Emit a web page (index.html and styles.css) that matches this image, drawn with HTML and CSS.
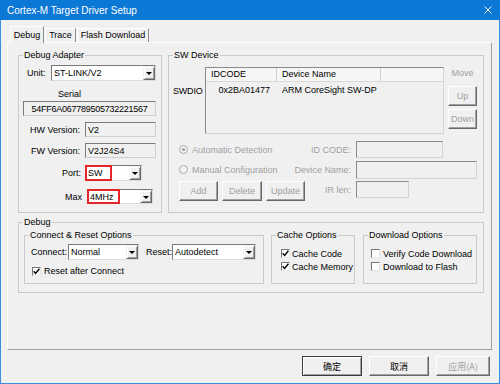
FILE: index.html
```html
<!DOCTYPE html>
<html>
<head>
<meta charset="utf-8">
<title>Cortex-M Target Driver Setup</title>
<link rel="stylesheet" href="styles.css">
</head>
<body>
<div class="window">
  <div class="titlebar">
    <span class="title">Cortex-M Target Driver Setup</span>
    <svg class="close" width="8" height="8" viewBox="0 0 8 8"><path d="M0.5 0.5L7.5 7.5M7.5 0.5L0.5 7.5" stroke="#fff" stroke-width="1" fill="none"/></svg>
  </div>

  <div class="tabs">
    <div class="tab active w-debug">Debug</div>
    <div class="tab w-trace">Trace</div>
    <div class="tab w-flash">Flash Download</div>
  </div>

  <div class="panel">
    <div class="row1">
      <fieldset class="grp da">
        <legend>Debug Adapter</legend>
        <div class="da-body">
          <div class="unit-row">
            <span class="unit-lbl">Unit:</span>
            <div class="select w-unit"><span class="val">ST-LINK/V2</span><span class="drop"><span class="arrow"></span></span></div>
          </div>
          <div class="serial-lbl">Serial</div>
          <div class="box serial">54FF6A067789505732221567</div>
          <div class="ver-row">
            <span class="rlbl">HW Version:</span>
            <div class="box ver">V2</div>
          </div>
          <div class="ver-row">
            <span class="rlbl">FW Version:</span>
            <div class="box ver">V2J24S4</div>
          </div>
          <div class="port-row">
            <span class="rlbl port-lbl">Port:</span>
            <div class="select w-port"><span class="val">SW</span><span class="drop"><span class="arrow"></span></span><span class="mark mark-port"></span></div>
          </div>
          <div class="max-row">
            <span class="rlbl max-lbl">Max</span>
            <div class="select w-max"><span class="val">4MHz</span><span class="drop"><span class="arrow"></span></span><span class="mark mark-max"></span></div>
          </div>
        </div>
      </fieldset>

      <fieldset class="grp sw">
        <legend>SW Device</legend>
        <div class="sw-top">
          <div class="swdio">SWDIO</div>
          <div class="list">
            <div class="list-head">
              <span class="c1">IDCODE</span>
              <span class="c2">Device Name</span>
              <span class="c3"></span>
            </div>
            <div class="list-row">
              <span class="r1">0x2BA01477</span>
              <span class="r2">ARM CoreSight SW-DP</span>
            </div>
          </div>
          <div class="move">
            <span class="move-lbl">Move</span>
            <div class="btn dis up">Up</div>
            <div class="btn dis down">Down</div>
          </div>
        </div>
        <div class="sw-bottom">
          <div class="radio r-auto"><svg width="9" height="9" viewBox="0 0 9 9"><circle cx="4.5" cy="4.5" r="4" fill="#f4f4f4" stroke="#a8a8a8"/><circle cx="4.5" cy="4.5" r="1.6" fill="#a0a0a0"/></svg><span>Automatic Detection</span></div>
          <div class="radio r-man"><svg width="9" height="9" viewBox="0 0 9 9"><circle cx="4.5" cy="4.5" r="4" fill="#f4f4f4" stroke="#a8a8a8"/></svg><span>Manual Configuration</span></div>
          <div class="sw-btns">
            <div class="btn dis b-add">Add</div>
            <div class="btn dis b-del">Delete</div>
            <div class="btn dis b-upd">Update</div>
          </div>
          <span class="flbl l1">ID CODE:</span>
          <div class="inp i-id"></div>
          <span class="flbl l2">Device Name:</span>
          <div class="inp i-name"></div>
          <span class="flbl l3">IR len:</span>
          <div class="inp i-ir"></div>
        </div>
      </fieldset>
    </div>

    <fieldset class="grp dbg">
      <legend>Debug</legend>
      <div class="dbg-body">
        <fieldset class="grp conn">
          <legend>Connect &amp; Reset Options</legend>
          <div class="conn-row">
            <span class="conn-lbl">Connect:</span>
            <div class="select w-conn"><span class="val">Normal</span><span class="drop"><span class="arrow"></span></span></div>
            <span class="reset-lbl">Reset:</span>
            <div class="select w-reset"><span class="val">Autodetect</span><span class="drop"><span class="arrow"></span></span></div>
          </div>
          <div class="chk-row conn-chk">
            <span class="cb"><svg width="7" height="7" viewBox="0 0 7 7"><path d="M0.6 3.2L2.6 5.4L6.4 0.8" fill="none" stroke="#000" stroke-width="1.4"/></svg></span>
            <span>Reset after Connect</span>
          </div>
        </fieldset>

        <fieldset class="grp cache">
          <legend>Cache Options</legend>
          <div class="chk-col cache-col">
            <div class="chk-row"><span class="cb"><svg width="7" height="7" viewBox="0 0 7 7"><path d="M0.6 3.2L2.6 5.4L6.4 0.8" fill="none" stroke="#000" stroke-width="1.4"/></svg></span><span>Cache Code</span></div>
            <div class="chk-row"><span class="cb"><svg width="7" height="7" viewBox="0 0 7 7"><path d="M0.6 3.2L2.6 5.4L6.4 0.8" fill="none" stroke="#000" stroke-width="1.4"/></svg></span><span>Cache Memory</span></div>
          </div>
        </fieldset>

        <fieldset class="grp dl">
          <legend>Download Options</legend>
          <div class="chk-col dl-col">
            <div class="chk-row"><span class="cb"></span><span>Verify Code Download</span></div>
            <div class="chk-row"><span class="cb"></span><span>Download to Flash</span></div>
          </div>
        </fieldset>
      </div>
    </fieldset>
  </div>

  <div class="actions">
    <div class="btn default w-btn">确定</div>
    <div class="btn w-btn">取消</div>
    <div class="btn dis w-apply">应用(A)</div>
  </div>
</div>
</body>
</html>
```

FILE: styles.css
```css
* { box-sizing: border-box; }
html, body { margin: 0; padding: 0; }
body {
  width: 500px;
  height: 384px;
  overflow: hidden;
  background: #f0f0f0;
  font-family: "Liberation Sans", Arial, "Noto Sans CJK SC", sans-serif;
  font-size: 9px;
  color: #000;
}
.window {
  width: 500px;
  height: 384px;
  border: 1px solid #3a8ddb;
  border-top: 0;
  display: flex;
  flex-direction: column;
  background: #f0f0f0;
}
.titlebar {
  height: 20px;
  margin: 0 -1px;
  background: #0b78d5;
  color: #fff;
  display: flex;
  align-items: center;
  justify-content: space-between;
  padding: 0 8px 0 7px;
  font-size: 10px;
  flex-shrink: 0;
}
.close { display: block; }

/* tabs */
.tabs {
  display: flex;
  align-items: flex-end;
  height: 16px;
  margin-top: 6px;
  padding-left: 9px;
  flex-shrink: 0;
}
.tab {
  height: 14px;
  line-height: 12px;
  text-align: center;
  border: 1px solid;
  border-bottom: 0;
  border-color: #fff #8e8e8e transparent #fff;
  margin-left: 1px;
  white-space: nowrap;
}
.tab.active {
  height: 17px;
  margin-bottom: -1px;
  padding-top: 2px;
  margin-left: 0;
  background: #f0f0f0;
  position: relative;
  z-index: 1;
}
.w-debug { width: 34px; }
.w-trace { width: 31px; }
.w-flash { width: 72px; }

.panel {
  margin-left: 6px;
  width: 485px;
  height: 308px;
  border: 1px solid;
  border-color: #fff #a0a0a0 #a0a0a0 #fff;
  padding: 7px 0 0 10px;
  flex-shrink: 0;
}
.row1 { display: flex; gap: 6px; }

/* group boxes */
.grp {
  margin: 0;
  padding: 0;
  min-width: 0;
  border: 1px solid #cacaca;
}
.grp legend {
  margin-left: 4px;
  padding: 0 1px;
  line-height: 11px;
  font-size: 9px;
}
.da { width: 144px; height: 163px; }
.sw { width: 316px; height: 163px; }

/* generic controls */
.select {
  position: relative;
  display: flex;
  height: 16px;
  border: 1px solid;
  border-color: #7a7a7a #dcdcdc #dcdcdc #7a7a7a;
  background: #fff;
}
.select .val {
  flex: 1;
  display: flex;
  align-items: center;
  padding-left: 2px;
  white-space: nowrap;
}
.select .drop {
  width: 12px;
  background: #f0f0f0;
  border: 1px solid;
  border-color: #f0f0f0 #696969 #696969 #f0f0f0;
  box-shadow: inset 1px 1px 0 #fff, inset -1px -1px 0 #a0a0a0;
  display: flex;
  align-items: center;
  justify-content: center;
}
.arrow {
  width: 0;
  height: 0;
  border-left: 3px solid transparent;
  border-right: 3px solid transparent;
  border-top: 3px solid #000;
  margin-top: 1px;
}
.box {
  display: flex;
  align-items: center;
  border: 1px solid;
  border-color: #7c7c7c #cfcfcf #cfcfcf #7c7c7c;
  padding-left: 2px;
  background: #f0f0f0;
  white-space: nowrap;
}
.mark {
  position: absolute;
  left: -1px;
  top: -1px;
  bottom: -1px;
  border: 2px solid #e4262b;
}
.mark-port { width: 27px; }
.mark-max { width: 33px; }

/* debug adapter */
.da-body { padding-left: 4px; }
.unit-row { display: flex; align-items: center; height: 16px; margin-top: 4px; }
.unit-lbl { margin-left: 4px; width: 24px; }
.w-unit { width: 105px; }
.serial-lbl { margin-top: 7px; line-height: 12px; padding-left: 35px; }
.serial {
  margin-top: 1px;
  width: 133px;
  height: 15px;
  justify-content: center;
  padding-left: 0;
  letter-spacing: -0.25px;
  overflow: hidden;
}
.ver-row { display: flex; align-items: center; height: 15px; margin-top: 6px; }
.rlbl { width: 57px; margin-right: 5px; text-align: right; white-space: nowrap; }
.ver { width: 71px; height: 15px; }
.port-row { display: flex; align-items: center; height: 16px; margin-top: 7px; }
.port-lbl { width: 58px; margin-right: 4px; }
.w-port { width: 57px; }
.max-row { display: flex; align-items: center; height: 15px; margin-top: 8px; }
.max-lbl { width: 59px; margin-right: 5px; }
.w-max { width: 66px; height: 15px; }

/* SW device */
.sw-top { display: flex; height: 67px; margin-top: 6px; }
.swdio { width: 36px; padding: 18px 0 0 4px; line-height: 12px; letter-spacing: -0.2px; }
.list {
  width: 239px;
  height: 67px;
  border: 1px solid;
  border-color: #8a8a8a #d4d4d4 #d4d4d4 #8a8a8a;
  background: #f0f0f0;
}
.list-head {
  display: flex;
  height: 14px;
  line-height: 13px;
  background: #f6f6f6;
  border-bottom: 1px solid #d8d8d8;
}
.list-head .c1 { width: 71px; padding-left: 5px; border-right: 1px solid #cfcfcf; }
.list-head .c2 { width: 104px; padding-left: 5px; border-right: 1px solid #cfcfcf; }
.list-head .c3 { flex: 1; }
.list-row { display: flex; line-height: 12px; margin-top: 2px; }
.list-row .r1 { width: 71px; text-align: right; padding-right: 7px; }
.list-row .r2 { padding-left: 5px; white-space: nowrap; }
.move { width: 29px; margin-left: 4px; display: flex; flex-direction: column; }
.move-lbl { line-height: 12px; text-align: center; color: #a0a0a0; }
.up { height: 20px; margin-top: 7px; }
.down { height: 20px; margin-top: 3px; }

.btn {
  display: flex;
  align-items: center;
  justify-content: center;
  border: 1px solid;
  border-color: #fff #696969 #696969 #fff;
  box-shadow: inset -1px -1px 0 #a0a0a0;
  background: #f0f0f0;
  white-space: nowrap;
}
.btn.dis { color: #a0a0a0; }
.btn.default {
  border-color: #3c3c3c;
  box-shadow: inset 1px 1px 0 #fff, inset -1px -1px 0 #a0a0a0;
}

.sw-bottom {
  display: grid;
  grid-template-columns: 115px 57px auto;
  grid-template-rows: 17px 17px 20px;
  row-gap: 3px;
  margin-top: 7px;
  padding-left: 10px;
}
.radio { display: flex; align-items: center; gap: 4px; color: #a0a0a0; white-space: nowrap; }
.radio svg { display: block; }
.r-auto { grid-row: 1; grid-column: 1; }
.r-man { grid-row: 2; grid-column: 1; }
.sw-btns { grid-row: 3; grid-column: 1 / 3; display: flex; gap: 4px; }
.b-add { width: 39px; height: 20px; }
.b-del { width: 40px; height: 20px; }
.b-upd { width: 39px; height: 20px; }
.flbl { grid-column: 2; justify-self: end; align-self: center; color: #a0a0a0; white-space: nowrap; }
.l1 { grid-row: 1; }
.l2 { grid-row: 2; }
.l3 { grid-row: 3; align-self: start; margin-top: 4px; }
.inp {
  grid-column: 3;
  margin-left: 5px;
  height: 17px;
  border: 1px solid;
  border-color: #8a8a8a #d4d4d4 #d4d4d4 #8a8a8a;
  background: #f0f0f0;
}
.i-id { grid-row: 1; width: 87px; }
.i-name { grid-row: 2; width: 121px; height: 18px; }
.i-ir { grid-row: 3; width: 53px; }

/* debug group */
.dbg { width: 466px; height: 76px; margin-top: 4px; }
.dbg-body { display: flex; padding-left: 5px; margin-top: 2px; }
.conn { width: 240px; height: 54px; }
.cache { width: 84px; height: 54px; margin-left: 7px; }
.dl { width: 114px; height: 54px; margin-left: 8px; }
.conn-row { display: flex; align-items: center; height: 16px; margin-top: 3px; padding-left: 6px; }
.conn-lbl { width: 37px; }
.w-conn { width: 71px; }
.reset-lbl { width: 26px; margin-left: 7px; }
.w-reset { width: 84px; }
.chk-row { display: flex; align-items: center; gap: 3px; height: 13px; white-space: nowrap; }
.conn-chk { margin-top: 5px; padding-left: 7px; height: 12px; }
.chk-col { margin-top: 6px; }
.cache-col { padding-left: 9px; }
.cache-col .chk-row { gap: 2px; }
.dl-col { padding-left: 7px; }
.cb {
  width: 9px;
  height: 9px;
  flex-shrink: 0;
  border: 1px solid;
  border-color: #777 #e6e6e6 #e6e6e6 #777;
  background: #fff;
  display: flex;
  align-items: center;
  justify-content: center;
}
.cb svg { display: block; }

/* dialog buttons */
.actions {
  display: flex;
  justify-content: flex-end;
  gap: 7px;
  margin-top: 6px;
  padding-right: 9px;
  flex-shrink: 0;
}
.actions .btn { height: 20px; font-family: "Noto Sans CJK SC", "Liberation Sans", sans-serif; font-size: 9px; }
.w-btn { width: 60px; }
.w-apply { width: 54px; }
```
